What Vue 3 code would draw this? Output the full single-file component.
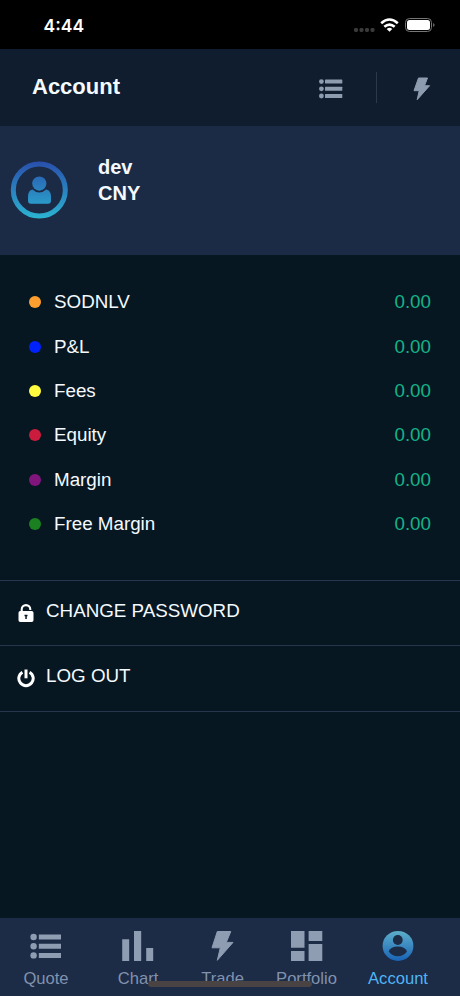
<script setup>
const metrics = [
  { label: 'SODNLV', color: '#ff9f30', value: '0.00' },
  { label: 'P&L', color: '#0022fa', value: '0.00' },
  { label: 'Fees', color: '#fffb3f', value: '0.00' },
  { label: 'Equity', color: '#cb1c3e', value: '0.00' },
  { label: 'Margin', color: '#80167c', value: '0.00' },
  { label: 'Free Margin', color: '#1b8020', value: '0.00' },
]
const tabs = [
  { label: 'Quote', icon: 'list' },
  { label: 'Chart', icon: 'bars' },
  { label: 'Trade', icon: 'bolt' },
  { label: 'Portfolio', icon: 'grid' },
  { label: 'Account', icon: 'user', active: true },
]
</script>

<template>
  <main class="screen">
    <div class="status">
      <span class="time">4:44</span>
      <svg class="signals" width="84" height="18" viewBox="0 0 84 18">
        <g fill="#3a3a3a">
          <rect x="1" y="11" width="4" height="4" rx="1.4" /><rect x="6.5" y="11" width="4" height="4" rx="1.4" />
          <rect x="12" y="11" width="4" height="4" rx="1.4" /><rect x="17.5" y="11" width="4" height="4" rx="1.4" />
        </g>
        <g fill="none" stroke="#fff" stroke-width="2.6">
          <path d="M28.2 6.2Q36.5 -1.2 44.8 6.2" />
          <path d="M31.3 9.8Q36.5 5.4 41.7 9.8" />
        </g>
        <path d="M33.7 11.9Q36.5 9.8 39.3 11.900L36.5 14.8Z" fill="#fff" />
        <rect x="52.5" y="1.5" width="26" height="13" rx="4" fill="none" stroke="#777" />
        <rect x="54" y="3" width="23" height="10" rx="2.5" fill="#fff" />
        <path d="M80.2 6Q83 8 80.2 10Z" fill="#777" />
      </svg>
    </div>

    <header class="header">
      <h1>Account</h1>
      <svg class="head-list" width="24" height="20" viewBox="0 0 24 20" fill="#8e9caf">
        <circle cx="2.4" cy="2.6" r="2.4" /><circle cx="2.4" cy="9.8" r="2.4" /><circle cx="2.4" cy="17" r="2.4" />
        <rect x="6" y=".6" width="17.3" height="4" rx=".5" /><rect x="6" y="7.8" width="17.3" height="4" rx=".5" /><rect x="6" y="15" width="17.3" height="4" rx=".5" />
      </svg>
      <i class="separator"></i>
      <svg class="head-bolt" width="18" height="24" viewBox="0 0 18 24">
        <path d="M5.5 1H14.5L11.5 8.7H16.6L4.2 22.7L6.2 13.7H1Z" fill="#8e9caf" stroke="#8e9caf" stroke-linejoin="round" />
      </svg>
    </header>

    <section class="profile">
      <svg width="58" height="58" viewBox="0 0 58 58">
        <defs>
          <linearGradient id="avatarFill" gradientUnits="userSpaceOnUse" x1="29" y1="0" x2="29" y2="58">
            <stop offset="0" stop-color="#294eac" /><stop offset="1" stop-color="#2bb5d2" />
          </linearGradient>
        </defs>
        <circle cx="29.3" cy="29" r="26" fill="none" stroke="url(#avatarFill)" stroke-width="5" />
        <circle cx="29.300" cy="22.6" r="7.1" fill="url(#avatarFill)" />
        <path d="M22.500 28.400Q29.300 34.800 36.100 28.400Q41 29.5 41 35.500V39.500Q41 42.700 38 42.700H21Q18 42.700 18 39.500V35.500Q18 29.500 22.500 28.400Z" fill="url(#avatarFill)" />
      </svg>
      <div class="identity"><div>dev</div><div>CNY</div></div>
    </section>

    <ul class="metrics">
      <li v-for="m in metrics" :key="m.label">
        <i class="dot" :style="{ background: m.color }"></i>
        <span>{{ m.label }}</span>
        <span class="value">{{ m.value }}</span>
      </li>
    </ul>

    <nav class="actions">
      <div class="action">
        <svg width="18" height="20" viewBox="0 0 18 20">
          <path d="M4.700 9V6.400a4.300 4.300 0 0 1 8.600 0V7" fill="none" stroke="#fff" stroke-width="2.1" />
          <path fill-rule="evenodd" fill="#fff" d="M3.300 8H14.700Q16.500 8 16.500 9.800V17.200Q16.500 19 14.700 19H3.300Q1.500 19 1.500 17.200V9.800Q1.500 8 3.300 8ZM7.500 11.700V13.200H8.300V16H9.800V13.200H10.500V11.700Z" />
        </svg>
        <span>CHANGE PASSWORD</span>
      </div>
      <div class="action">
        <svg width="18" height="20" viewBox="0 0 18 20" fill="none" stroke="#fff" stroke-width="3">
          <path d="M5.400 4.200A7.200 7.200 0 1 0 12.600 4.200" /><path d="M9 1.500V10.300" />
        </svg>
        <span>LOG OUT</span>
      </div>
    </nav>

    <footer class="tabs">
      <div v-for="t in tabs" :key="t.label" class="tab" :class="{ active: t.active }">
        <svg width="32" height="32" viewBox="0 0 32 32" fill="#8e9db1">
          <g v-if="t.icon === 'list'">
            <circle cx="3.6" cy="7" r="3.2" /><circle cx="3.6" cy="16.2" r="3.2" /><circle cx="3.6" cy="25.4" r="3.2" />
            <path d="M8.8 4.5H31V9.500H8.800ZM8.800 13.700H31V18.700H8.800ZM8.800 22.900H31V27.900H8.800Z" />
          </g>
          <path v-else-if="t.icon === 'bars'" d="M.2 9.2H7.2V31H.2ZM12 1H19.200V31H12ZM24.200 18H31.200V31H24.200Z" />
          <path v-else-if="t.icon === 'bolt'" d="M10.300 1.500H23.800L19.300 12.400H26L10.300 30.300L13.300 17.800H5Z" stroke="#8e9db1" stroke-linejoin="round" />
          <path v-else-if="t.icon === 'grid'" d="M0 1H13.500V17.800H0ZM0 21H13.500V31H0ZM17.600 1H31.300V11H17.600ZM17.600 14H31.300V31H17.600Z" />
          <g v-else>
            <defs>
              <linearGradient id="tabFill" x1="0" y1="0" x2="0" y2="1"><stop offset="0" stop-color="#5dafca" /><stop offset="1" stop-color="#1963b6" /></linearGradient>
            </defs>
            <ellipse cx="16" cy="15.9" rx="15.4" ry="15" fill="url(#tabFill)" />
            <circle cx="15.8" cy="10" r="4.9" fill="#1c2b46" />
            <path d="M6.700 21.500Q8.800 16.500 15.800 16.500Q22.800 16.500 25 21.500Q21.500 26.200 15.800 26.200Q10.100 26.200 6.700 21.500Z" fill="#1c2b46" />
          </g>
        </svg>
        <span>{{ t.label }}</span>
      </div>
      <i class="home-indicator"></i>
    </footer>
  </main>
</template>

<style>
body { margin: 0; background: #071722; }
</style>

<style scoped>
.screen {
  box-sizing: border-box;
  width: 460px;
  height: 996px;
  display: flex;
  flex-direction: column;
  overflow: hidden;
  background: #071722;
  color: #f4faff;
  font: 18.8px/24px "Liberation Sans", Arial, sans-serif;
}
svg { display: block; flex: none; }
.status {
  height: 49px;
  flex: none;
  display: flex;
  justify-content: space-between;
  box-sizing: border-box;
  padding: 14px 23px 0 43.5px;
  background: #000;
}
.time { font: 600 17.5px/24px Inter, sans-serif; color: #fff; }
.signals { margin-top: 3px; }
.header {
  height: 77px;
  flex: none;
  box-sizing: border-box;
  display: flex;
  align-items: center;
  padding: 0 29px 0 32px;
  background: #101d2e;
}
h1 { margin: 0 auto 1px 0; font-size: 22px; line-height: 26px; font-weight: 700; }
.head-list { margin-top: 3px; }
.separator { width: 1px; height: 31px; margin: 0 36px 0 33px; background: #2c394b; }
.head-bolt { margin-top: 2px; }
.profile {
  height: 129px;
  flex: none;
  box-sizing: border-box;
  display: flex;
  align-items: center;
  gap: 30px;
  padding: 0 0 1px 10px;
  background: #1c2b45;
}
.identity { padding-bottom: 20px; font-weight: 700; font-size: 20px; line-height: 26px; }
.metrics {
  box-sizing: border-box;
  flex: none;
  list-style: none;
  margin: 0;
  padding: 25px 29px 0;
  height: 324.5px;
}
.metrics li { height: 44.4px; display: flex; align-items: center; }
.dot { width: 12px; height: 12px; border-radius: 50%; margin-right: 13px; }
.value { margin-left: auto; color: #14b388; }
.action {
  box-sizing: border-box;
  height: 65.7px;
  display: flex;
  gap: 11px;
  padding: 18px 17px 0;
  border-top: 1px solid #26364c;
}
.action svg { margin-top: 4px; }
.action:last-child { height: 67px; border-bottom: 1px solid #26364c; }
.tabs {
  position: relative;
  height: 78px;
  margin-top: auto;
  flex: none;
  display: grid;
  grid-template-columns: 92px 92px 77px 91px 92px;
  background: #1c2b46;
}
.tab {
  display: flex;
  flex-direction: column;
  align-items: center;
  padding-top: 12px;
  color: #8192ae;
  font-size: 16.6px;
  line-height: 20px;
}
.tab span { margin-top: 7px; }
.active { color: #50b4f4; }
.home-indicator {
  position: absolute;
  left: 148px;
  bottom: 9px;
  width: 164px;
  height: 6px;
  border-radius: 3px;
  background: #494343;
}
</style>
